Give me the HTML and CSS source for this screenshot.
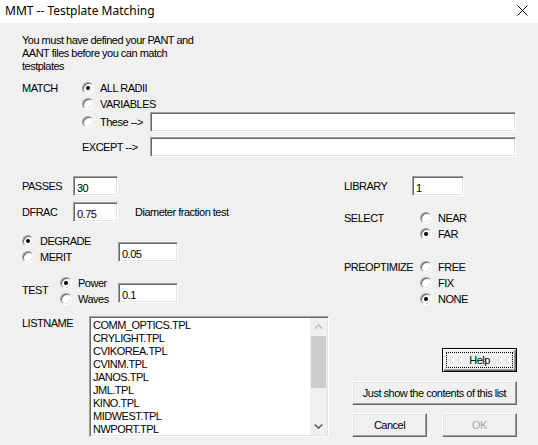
FILE: index.html
```html
<!DOCTYPE html>
<html>
<head>
<meta charset="utf-8">
<link rel="stylesheet" href="styles.css">
</head>
<body>
<div class="dialog">
  <div class="titlebar">
    <span class="title">MMT -- Testplate Matching</span>
    <svg class="close" width="11" height="11" viewBox="0 0 11 11"><path d="M0.5 0.5 L10.5 10.5 M10.5 0.5 L0.5 10.5" stroke="#000" stroke-width="1" fill="none"/></svg>
  </div>
  <div class="main">
    <p class="intro">You must have defined your PANT and<br>AANT files before you can match<br>testplates</p>

    <div class="row r16 first">
      <span class="lbl w60">MATCH</span>
      <label class="radio"><span class="dot on"></span>ALL RADII</label>
    </div>
    <div class="row r16 ind60">
      <label class="radio"><span class="dot"></span>VARIABLES</label>
    </div>
    <div class="row r20 ind60">
      <label class="radio w68"><span class="dot"></span>These --&gt;</label>
      <input class="field grow" type="text" value="">
    </div>
    <div class="row r20 ind60 except">
      <span class="lbl w68">EXCEPT --&gt;</span>
      <input class="field grow" type="text" value="">
    </div>

    <div class="cols">
      <div class="col-left">
        <div class="row r20">
          <span class="lbl w51">PASSES</span>
          <input class="field w45" type="text" value="30">
        </div>
        <div class="row r20 dfrac">
          <span class="lbl w51">DFRAC</span>
          <input class="field w45" type="text" value="0.75">
          <span class="note">Diameter fraction test</span>
        </div>
        <div class="block degrade">
          <div class="group w96">
            <label class="radio r16"><span class="dot on"></span>DEGRADE</label>
            <label class="radio r16"><span class="dot"></span>MERIT</label>
          </div>
          <input class="field w60 deg-input" type="text" value="0.05">
        </div>
        <div class="block test">
          <span class="lbl w38 test-lbl">TEST</span>
          <div class="group w58">
            <label class="radio r16"><span class="dot on"></span>Power</label>
            <label class="radio r16"><span class="dot"></span>Waves</label>
          </div>
          <input class="field w60 test-input" type="text" value="0.1">
        </div>
        <div class="block listname">
          <span class="lbl w67 list-lbl">LISTNAME</span>
          <div class="listbox">
            <ul class="items">
              <li>COMM_OPTICS.TPL</li>
              <li>CRYLIGHT.TPL</li>
              <li>CVIKOREA.TPL</li>
              <li>CVINM.TPL</li>
              <li>JANOS.TPL</li>
              <li>JML.TPL</li>
              <li>KINO.TPL</li>
              <li>MIDWEST.TPL</li>
              <li>NWPORT.TPL</li>
            </ul>
            <div class="scrollbar">
              <div class="arrow"><svg width="9" height="5" viewBox="0 0 9 5"><path d="M0.7 4.5 L4.5 0.9 L8.3 4.5" stroke="#bfbfbf" stroke-width="1.6" fill="none"/></svg></div>
              <div class="track"><div class="thumb"></div></div>
              <div class="arrow"><svg width="9" height="5" viewBox="0 0 9 5"><path d="M0.7 0.5 L4.5 4.1 L8.3 0.5" stroke="#606060" stroke-width="1.6" fill="none"/></svg></div>
            </div>
          </div>
        </div>
      </div>

      <div class="col-right">
        <div class="row r20">
          <span class="lbl w68">LIBRARY</span>
          <input class="field w52" type="text" value="1">
        </div>
        <div class="block select">
          <span class="lbl w76 r16">SELECT</span>
          <div class="group">
            <label class="radio r16"><span class="dot"></span>NEAR</label>
            <label class="radio r16"><span class="dot on"></span>FAR</label>
          </div>
        </div>
        <div class="block preopt">
          <span class="lbl w76 r16">PREOPTIMIZE</span>
          <div class="group">
            <label class="radio r16"><span class="dot"></span>FREE</label>
            <label class="radio r16"><span class="dot"></span>FIX</label>
            <label class="radio r16"><span class="dot on"></span>NONE</label>
          </div>
        </div>
        <div class="buttons">
          <button class="btn default w75 help"><span class="focus">Help</span></button>
          <button class="btn w165 show">Just show the contents of this list</button>
          <div class="btn-row">
            <button class="btn w75">Cancel</button>
            <button class="btn w75 disabled">OK</button>
          </div>
        </div>
      </div>
    </div>
  </div>
</div>
</body>
</html>
```

FILE: styles.css
```css
* { box-sizing: border-box; }
html, body { margin: 0; padding: 0; }
body {
  width: 538px;
  height: 445px;
  overflow: hidden;
  background: #f0f0f0;
  font-family: "Liberation Sans", Arial, sans-serif;
  font-size: 11px;
  letter-spacing: -0.5px;
  color: #000;
}
.dialog { width: 538px; height: 445px; display: flex; flex-direction: column; }
.titlebar {
  height: 23px;
  background: #fff;
  display: flex;
  align-items: flex-start;
  justify-content: space-between;
  padding: 2px 10px 0 5px;
}
.title {
  font-family: "Noto Sans", "Open Sans", sans-serif;
  font-size: 12px;
  line-height: 17px;
  letter-spacing: 0;
}
.close { margin-top: 3px; }
.main { padding: 11px 21px 0 22px; }
.intro { margin: 0; line-height: 13px; }

.row { display: flex; align-items: center; }
.r16 { height: 16px; display: flex; align-items: center; }
.r20 { height: 20px; }
.first { margin-top: 7px; }
.ind60 { padding-left: 60px; }
.except { margin-top: 5px; }
.lbl { white-space: nowrap; flex: none; }
.w38 { width: 38px; }
.w45 { width: 45px; }
.w51 { width: 51px; }
.w52 { width: 52px; }
.w58 { width: 58px; }
.w60 { width: 60px; }
.w67 { width: 67px; }
.w68 { width: 68px; }
.w75 { width: 75px; }
.w76 { width: 76px; }
.w96 { width: 96px; }
.w165 { width: 165px; }

.radio { display: flex; align-items: center; white-space: nowrap; flex: none; }
.dot {
  width: 12px; height: 12px;
  border-radius: 50%;
  border: 1px solid;
  border-color: #a0a0a0 #ffffff #ffffff #a0a0a0;
  box-shadow: inset 1px 1px 0 #696969, inset -1px -1px 0 #e3e3e3;
  background: #fff;
  margin-right: 6px;
  display: flex; align-items: center; justify-content: center;
  flex: none;
}
.dot.on::after {
  content: "";
  width: 4px; height: 4px;
  border-radius: 50%;
  background: #000;
}

.field {
  height: 20px;
  background: #fff;
  border: 1px solid;
  border-color: #a0a0a0 #ffffff #ffffff #a0a0a0;
  box-shadow: inset 1px 1px 0 #696969, inset -1px -1px 0 #e3e3e3;
  font: inherit;
  letter-spacing: inherit;
  padding: 3px 2px 0 3px;
  margin: 0;
  outline: none;
  color: #000;
  flex: none;
}
.field.grow { flex: 1 1 auto; min-width: 0; margin-right: 1px; }

.cols { display: grid; grid-template-columns: 322px 1fr; margin-top: 19px; }
.dfrac { margin-top: 6px; }
.note { margin-left: 17px; }
.block { display: flex; align-items: flex-start; }
.group { display: flex; flex-direction: column; flex: none; }
.degrade { margin-top: 11px; }
.deg-input { margin-top: 9px; }
.test { margin-top: 10px; }
.test-lbl { margin-top: 9px; line-height: 13px; }
.test-input { margin-top: 8px; }
.listname { margin-top: 9px; }
.list-lbl { line-height: 13px; padding-top: 1px; }

.listbox {
  width: 240px; height: 121px;
  background: #fff;
  border: 1px solid;
  border-color: #a0a0a0 #ffffff #ffffff #a0a0a0;
  box-shadow: inset 1px 1px 0 #696969, inset -1px -1px 0 #e3e3e3;
  padding: 1px;
  display: flex;
}
.items { list-style: none; margin: 0; padding: 1px 0 0 2px; flex: 1; line-height: 13px; overflow: hidden; }
.scrollbar { width: 17px; background: #f0f0f0; display: flex; flex-direction: column; }
.arrow { height: 17px; display: flex; align-items: center; justify-content: center; }
.track { flex: 1; padding: 1px 1px 0 1px; }
.thumb { height: 52px; background: #cdcdcd; }

.select { margin-top: 14px; }
.preopt { margin-top: 17px; }
.buttons { display: flex; flex-direction: column; align-items: flex-end; margin-top: 41px; }
.btn {
  height: 24px;
  background: #f0f0f0;
  border: 1px solid;
  border-color: #ffffff #696969 #696969 #ffffff;
  box-shadow: inset -1px -1px 0 #a0a0a0, inset 1px 1px 0 #e3e3e3;
  font: inherit;
  letter-spacing: inherit;
  color: #000;
  padding: 0;
  margin: 0;
  display: flex; align-items: center; justify-content: center;
  white-space: nowrap;
}
.btn.default {
  border: 1px solid #000;
  box-shadow: inset 1px 1px 0 #fff, inset -1px -1px 0 #696969, inset -2px -2px 0 #a0a0a0;
  padding: 3px;
  align-items: stretch;
}
.focus {
  flex: 1;
  border: 1px dotted #000;
  display: flex; align-items: center; justify-content: center;
}
.show { margin-top: 9px; }
.btn-row { display: flex; gap: 15px; margin-top: 8px; }
.disabled { color: #a0a0a0; text-shadow: 1px 1px 0 #fff; }
```
